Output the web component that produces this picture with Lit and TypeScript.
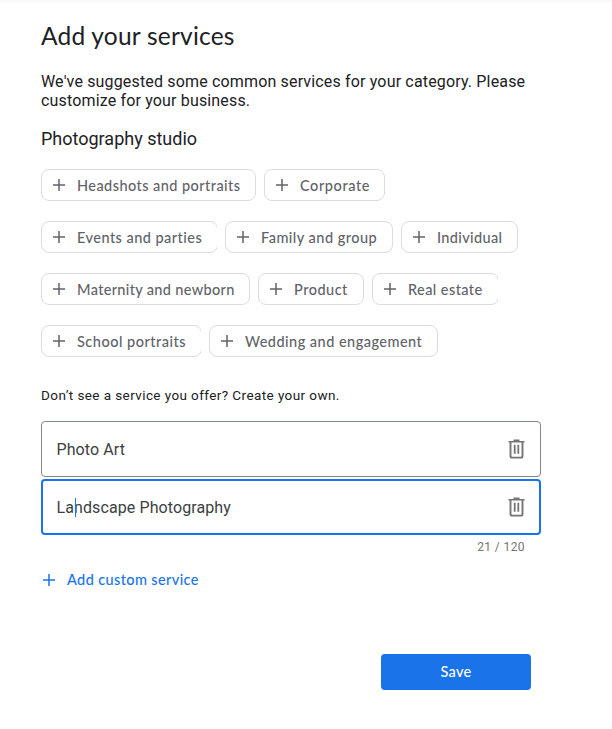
import { LitElement, html, css, svg } from "lit";
import { customElement, property } from "lit/decorators.js";
import { classMap } from "lit/directives/class-map.js";
import { styleMap } from "lit/directives/style-map.js";

interface Service {
  label: string;
  width: number;
  spacing: number;
  open?: boolean;
}

const ROWS: Service[][] = [
  [
    { label: "Headshots and portraits", width: 215, spacing: 0.44 },
    { label: "Corporate", width: 121, spacing: 0.58 },
  ],
  [
    { label: "Events and parties", width: 176, spacing: 0.46, open: true },
    { label: "Family and group", width: 168, spacing: 0.48 },
    { label: "Individual", width: 117, spacing: 0.35 },
  ],
  [
    { label: "Maternity and newborn", width: 209, spacing: 0.34 },
    { label: "Product", width: 106, spacing: 0.5 },
    { label: "Real estate", width: 126, spacing: 0.42, open: true },
  ],
  [
    { label: "School portraits", width: 160, spacing: 0.5, open: true },
    { label: "Wedding and engagement", width: 229, spacing: 0.47 },
  ],
];

const plus = html`<svg width="12" height="12" viewBox="0 0 12 12">
  ${svg`<path d="M6 0v12M0 6h12" fill="none" stroke="currentColor" stroke-width="1.5" />`}
</svg>`;

const trash = html`<svg width="18" height="20" viewBox="0 0 18 20">
  ${svg`<path d="M5.5 1.3h6M0.5 2.8h16" fill="none" stroke="currentColor" stroke-width="1.6" />
  <path d="M2.5 3v14q0 1.6 1.6 1.6h8.8q1.6 0 1.6-1.6V3" fill="none" stroke="currentColor" stroke-width="1.9" />
  <path d="M6.7 5.8v9M10.3 5.8v9" fill="none" stroke="currentColor" stroke-width="1.8" />`}
</svg>`;

@customElement("service-chip")
export class ServiceChip extends LitElement {
  @property({ attribute: false }) service!: Service;

  static styles = css`
    :host { display: block; }
    .chip {
      box-sizing: border-box;
      height: 32px;
      display: flex;
      align-items: center;
      gap: 12px;
      padding: 0 0 0 11px;
      border: 1px solid #dadce0;
      border-radius: 8px;
      background: #fff;
      color: #5f6368;
      font: 500 14.5px/20px "Google Sans", Lato, sans-serif;
      white-space: nowrap;
    }
    .open { clip-path: inset(0 1px 0 0); margin-right: -1px; }
    .label { padding-top: 1px; }
    svg { flex: none; }
  `;

  render() {
    const s = this.service;
    return html`<div
      class=${classMap({ chip: true, open: !!s.open })}
      style=${styleMap({ width: `${s.width + (s.open ? 1 : 0)}px`, letterSpacing: `${s.spacing}px` })}
    >${plus}<span class="label">${s.label}</span></div>`;
  }
}

@customElement("app-root")
export class AppRoot extends LitElement {
  static styles = css`
    :host {
      display: block;
      box-sizing: border-box;
      height: 729px;
      overflow: hidden;
      padding: 20px 71px 0 41px;
      background: linear-gradient(#f8f8f8, #fff 4px);
      color: #202124;
      font-family: Roboto, sans-serif;
    }
    h1, h2, p { margin: 0; font-weight: 400; }
    h1 { font: 400 24.5px/32px "Google Sans", Lato, sans-serif; letter-spacing: 0.22px; }
    .intro { margin-top: 20px; font-size: 16px; line-height: 19px; white-space: nowrap; letter-spacing: 0.16px; }
    h2 { margin-top: 17px; font-size: 18px; line-height: 24px; }
    .rows { display: flex; flex-direction: column; gap: 20px; margin-top: 18px; }
    .row { display: flex; gap: 8px; }
    .hint { margin-top: 28px; font-size: 13.5px; line-height: 20px; letter-spacing: 0.41px; }
    .field {
      box-sizing: border-box;
      width: 500px;
      height: 56px;
      display: flex;
      align-items: center;
      justify-content: space-between;
      margin-top: 16px;
      padding: 0 14px 0 14.5px;
      border: 1px solid #80868b;
      border-radius: 4px;
      color: #3c4043;
      font-size: 16px;
      line-height: 24px;
      letter-spacing: 0.1px;
    }
    .field svg { color: #757575; }
    .focused { margin-top: 2px; border: 2px solid #1a73e8; padding: 0 13px 0 13.5px; }
    .value { position: relative; padding-top: 2px; }
    .caret { position: absolute; left: 18.5px; top: 4px; width: 1px; height: 19px; background: #1a73e8; }
    .count { width: 484px; margin-top: 4px; text-align: right; font-size: 12px; line-height: 16px; letter-spacing: 0.4px; color: #757575; }
    .add {
      display: flex;
      align-items: center;
      gap: 12px;
      margin-top: 15px;
      padding-left: 2px;
      color: #1a73e8;
      font: 500 14.5px/20px "Google Sans", Lato, sans-serif;
      letter-spacing: 0.38px;
    }
    .save {
      display: block;
      width: 150px;
      height: 36px;
      margin: 64px 0 0 340px;
      padding: 0;
      border: 0;
      border-radius: 4px;
      background: #1a73e8;
      color: #fff;
      font: 500 14.5px/36px "Google Sans", Lato, sans-serif;
      letter-spacing: 0.3px;
    }
  `;

  render() {
    return html`
      <h1>Add your services</h1>
      <p class="intro">We've suggested some common services for your category. Please<br />customize for your business.</p>
      <h2>Photography studio</h2>
      <div class="rows">
        ${ROWS.map((row) => html`<div class="row">${row.map((s) => html`<service-chip .service=${s}></service-chip>`)}</div>`)}
      </div>
      <p class="hint">Don’t see a service you offer? Create your own.</p>
      <div class="field"><span class="value">Photo Art</span>${trash}</div>
      <div class="field focused"><span class="value">Landscape Photography<span class="caret"></span></span>${trash}</div>
      <div class="count">21 / 120</div>
      <div class="add">${plus}<span>Add custom service</span></div>
      <button class="save">Save</button>
    `;
  }
}
